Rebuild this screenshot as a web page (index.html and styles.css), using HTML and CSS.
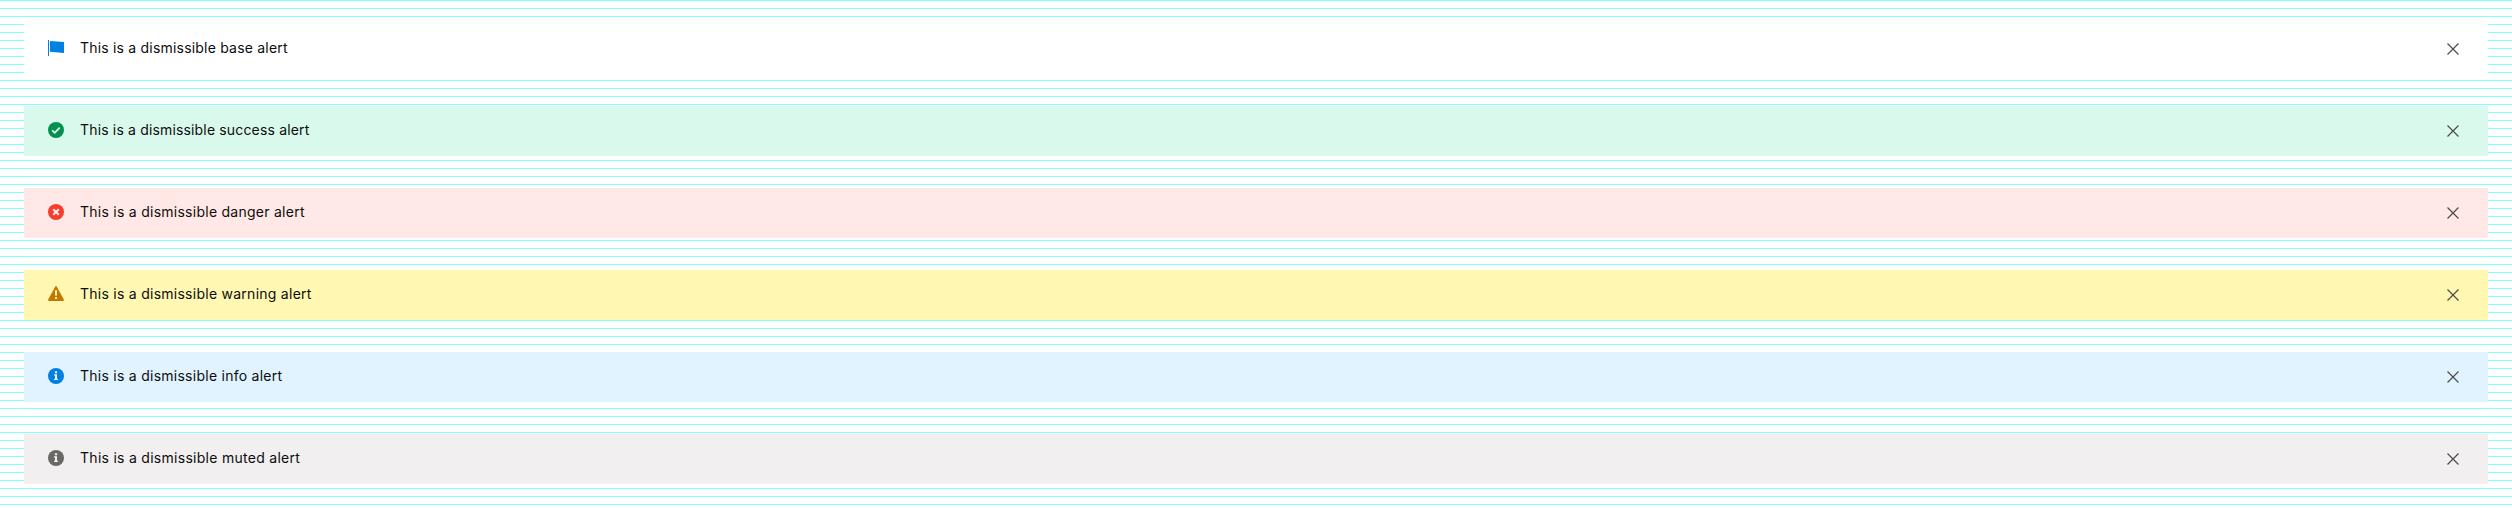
FILE: index.html
```html
<!DOCTYPE html>
<html lang="en">
<head>
<meta charset="utf-8">
<title>Dismissible alerts</title>
<link rel="stylesheet" href="styles.css">
</head>
<body>
<svg class="sprite" aria-hidden="true">
  <symbol id="close" viewBox="0 0 12 12"><path d="M.5.5l11 11M11.5.5l-11 11" fill="none" stroke="currentColor" stroke-width="1.2"/></symbol>
  <symbol id="info" viewBox="0 0 16 16"><circle cx="8" cy="8" r="8" fill="currentColor"/><path d="M6.9 3.2h2.2v2H6.9zM6 6.2h3v4.600h1V12H6v-1.200h1V7.400H6z" fill="#fff" fill-opacity=".9"/></symbol>
</svg>
<main class="alerts">
  <div class="alert alert-base">
    <svg class="icon" viewBox="0 0 16 16"><path d="M0 0h1v16H0zM2 1l14 1v11L2 11.7z" fill="currentColor"/></svg>
    <span class="message">This is a dismissible base alert</span>
    <button class="close" aria-label="Close"><svg viewBox="0 0 12 12"><use href="#close"/></svg></button>
  </div>
  <div class="alert alert-success">
    <svg class="icon" viewBox="0 0 16 16"><circle cx="8" cy="8" r="8" fill="currentColor"/><path d="M4.200 8.300l2.500 2.500 5-5.200" fill="none" stroke="#e6fbf1" stroke-width="1.8"/></svg>
    <span class="message">This is a dismissible success alert</span>
    <button class="close" aria-label="Close"><svg viewBox="0 0 12 12"><use href="#close"/></svg></button>
  </div>
  <div class="alert alert-danger">
    <svg class="icon" viewBox="0 0 16 16"><circle cx="8" cy="8" r="8" fill="currentColor"/><path d="M5.200 5.200l5.600 5.600M10.800 5.200l-5.600 5.600" stroke="#ffebe9" stroke-width="2"/></svg>
    <span class="message">This is a dismissible danger alert</span>
    <button class="close" aria-label="Close"><svg viewBox="0 0 12 12"><use href="#close"/></svg></button>
  </div>
  <div class="alert alert-warning">
    <svg class="icon" viewBox="0 0 16 16"><path d="M7.300.5q.7-1 1.400 0L15.800 13.500q.5 1.500-.8 1.500H1q-1.300 0-.8-1.500z" fill="currentColor"/><path d="M7 4.300h2v5.200H7zM7 11h2v2H7z" fill="#fff7b2"/></svg>
    <span class="message">This is a dismissible warning alert</span>
    <button class="close" aria-label="Close"><svg viewBox="0 0 12 12"><use href="#close"/></svg></button>
  </div>
  <div class="alert alert-info">
    <svg class="icon" viewBox="0 0 16 16"><use href="#info"/></svg>
    <span class="message">This is a dismissible info alert</span>
    <button class="close" aria-label="Close"><svg viewBox="0 0 12 12"><use href="#close"/></svg></button>
  </div>
  <div class="alert alert-muted">
    <svg class="icon" viewBox="0 0 16 16"><use href="#info"/></svg>
    <span class="message">This is a dismissible muted alert</span>
    <button class="close" aria-label="Close"><svg viewBox="0 0 12 12"><use href="#close"/></svg></button>
  </div>
</main>
</body>
</html>
```
FILE: styles.css
```css
body {
  margin: 0;
  color: #0d0d0d;
  font: 14px/20px Inter, "Open Sans", sans-serif;
}
.sprite { display: none; }
.alerts {
  box-sizing: border-box;
  display: grid;
  grid-auto-rows: 50px;
  row-gap: 32px;
  height: 508px;
  padding: 24px 24px 0;
  background: #fff repeating-linear-gradient(#80ffff 0 1px, #fff 1px 8px);
}
.alert {
  box-sizing: border-box;
  display: flex;
  align-items: center;
  padding: 0 29px 2px 24px;
  letter-spacing: 0.26px;
}
.icon { width: 16px; height: 16px; flex: none; color: inherit; }
.message {
  flex: 1;
  margin-left: 16px;
  color: #0d0d0d;
}
.close {
  display: flex;
  margin: 2px 0 0;
  padding: 0;
  border: 0;
  background: none;
  color: #4c4a4a;
  cursor: pointer;
}
.close svg { width: 12px; height: 12px; }
.alert-base { background: #fff; color: #0080e1; letter-spacing: 0.2px; }
.alert-success { background: #d9f9ec; color: #009151; letter-spacing: 0.16px; }
.alert-danger { background: #ffe8e6; color: #f53d2b; }
.alert-warning { background: #fff7b2; color: #c27800; }
.alert-info { background: #e0f3ff; color: #0080e1; }
.alert-muted { background: #f1eff0; color: #6a6767; letter-spacing: 0.28px; }
```
